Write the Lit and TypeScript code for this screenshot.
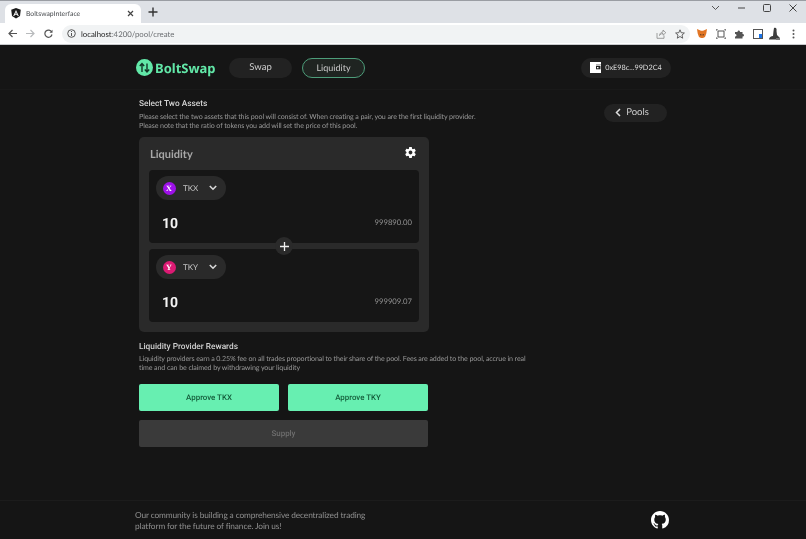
import { LitElement, html, css } from "lit";
import { customElement } from "lit/decorators.js";

const chev = (c: string) => html`<svg width="8" height="6" viewBox="0 0 8 6"><path d="M.8 1 4 4.200 7.200 1" fill="none" stroke="${c}" stroke-width="1.600"/></svg>`;

@customElement("app-root")
export class AppRoot extends LitElement {
  static styles = css`
    :host { display: block; width: 806px; height: 539px; overflow: hidden; background: #151515; font-family: Lato, sans-serif; color: #ddd; text-rendering: geometricPrecision; }
    .chrome { height: 45px; display: flex; flex-direction: column; background: #fff; will-change: transform; }
    .strip { height: 24px; box-sizing: border-box; background: #dee1e6; border-top: 1px solid #9a9da3; display: flex; align-items: flex-end; padding-left: 5px; }
    .tab { width: 136px; height: 19px; box-sizing: border-box; background: #fff; border-radius: 6px 6px 0 0; display: flex; align-items: center; padding: 0 7px 0 6px; gap: 5px; font: 6.800px Lato, sans-serif; color: #45484c; }
    .tab span { flex: 1; }
    .newtab { margin: 0 0 2px 7px; width: 14px; height: 14px; display: flex; }
    .winctl { margin-left: auto; display: flex; align-items: center; align-self: center; gap: 18px; padding: 0 9px 8px 0; }
    .toolbar { height: 21px; display: flex; align-items: center; padding: 0 8px 0 8px; border-bottom: 1px solid #c9cbce; }
    .nav { display: flex; gap: 9px; align-items: center; margin-right: 9px; }
    .addr { width: 628px; height: 18px; background: #f1f3f4; border-radius: 9px; display: flex; align-items: center; padding: 0 5px 0 5px; box-sizing: border-box; font: 7.800px Lato, sans-serif; color: #6a6d70; gap: 5px; }
    .addr b { font-weight: 400; color: #222; }
    .addr .r { margin-left: auto; display: flex; gap: 9px; align-items: center; }
    .exts { display: flex; align-items: center; gap: 8.500px; margin-left: 7px; }
    .avatar { margin-left: -3px; }
    .dots { margin-left: 2.500px; }

    .header { height: 45px; box-sizing: border-box; display: flex; align-items: center; padding: 1px 135px 0 136px; border-bottom: 1px solid #191919; will-change: transform; }
    .logo { display: flex; align-items: center; gap: 2px; font: 700 13px "Noto Sans", sans-serif; color: #62e8a8; width: 93px; }
    .pill { height: 20px; box-sizing: border-box; border-radius: 10px; background: #222; color: #ccc; font-size: 9px; display: flex; align-items: center; justify-content: center; }
    .swap { width: 63px; margin-right: 10px; font-size: 9.500px; }
    .liq { width: 63px; background: #1f2421; border: 1px solid #4d9d7a; }
    .wallet { margin-left: auto; width: 90px; gap: 4px; font-size: 7.300px; color: #ddd; }

    .main { height: 411px; box-sizing: border-box; display: flex; padding: 9px 139px 0 139px; border-bottom: 1px solid #1c1c1c; will-change: transform; }
    .col { width: 390px; flex: none; }
    h2 { margin: 0; font: 500 8.300px/11px Roboto, sans-serif; color: #d2d2d2; }
    p { margin: 2px 0 0; font-size: 7.100px; letter-spacing: -.11px; line-height: 9px; color: #969696; white-space: nowrap; }
    .card { width: 290px; height: 195px; margin-top: 7px; box-sizing: border-box; background: #2a2a2a; border-radius: 5px; padding: 0 10px; position: relative; }
    .card-h { height: 33px; box-sizing: border-box; display: flex; align-items: center; justify-content: space-between; font-size: 11px; font-weight: 700; color: #a8a8a8; padding: 1px 2px 0 1px; }
    .gear { margin-top: -3px; }
    .panel { height: 73px; box-sizing: border-box; background: #161616; border-radius: 4px; padding: 6px 7px 0 6.500px; margin-bottom: 6px; }
    .sel { display: flex; width: 70px; height: 24px; box-sizing: border-box; align-items: center; background: #2a2a2a; border-radius: 12px; padding: 0 9px 0 7px; font-size: 8px; color: #c4c4c4; }
    .coin { width: 13px; height: 13px; border-radius: 50%; color: #fff; font: 700 8px "Liberation Serif", serif; display: flex; align-items: center; justify-content: center; margin-right: 7.500px; flex: none; }
    .x { background: #9d10e8; }
    .y { background: #dc1a73; }
    .sel svg { margin-left: auto; }
    .row { display: flex; align-items: center; justify-content: space-between; margin-top: 16px; padding: 0 0 0 6.500px; }
    .amt { font: 700 14px Roboto, sans-serif; color: #f4f4f4; line-height: 17px; }
    .bal { font-size: 7.700px; color: #909090; margin-bottom: 5px; }
    .plus { position: absolute; left: 136px; top: 100px; width: 18px; height: 18px; border-radius: 50%; background: #2a2a2a; display: flex; align-items: center; justify-content: center; }
    .rewards { margin-top: 10px; }
    .rewards p { margin-top: 1px; }
    .btns { display: grid; grid-template-columns: 140px 140px; gap: 9px; width: 289px; margin-top: 12px; }
    .btn { height: 27px; border-radius: 2px; display: flex; align-items: center; justify-content: center; font: 500 7.900px Roboto, sans-serif; background: #67efb1; color: #145d3b; }
    .supply { grid-column: span 2; background: #3a3a3a; color: #6f6f6f; }
    .pools { margin: 4.500px 0 0 75px; width: 63px; height: 18px; gap: 5px; font-size: 9.500px; flex: none; padding-right: 7px; }
    .footer { height: 38px; display: flex; align-items: center; justify-content: space-between; padding: 0 137px 0 135px; will-change: transform; }
    .footer div { font-size: 8.300px; letter-spacing: -.11px; line-height: 11.500px; color: #8f8f8f; margin-top: 2px; }
  `;

  render() {
    return html`
      <div class="chrome">
        <div class="strip">
          <div class="tab">
            <svg width="10" height="11" viewBox="0 0 10 11"><path d="M5 0 .2 1.700 1 8 5 10.500 9 8 9.800 1.700Z" fill="#1a1a1a"/><path d="M5 2 2.200 8h1.100L3.900 6.700H6.100L6.700 8h1.100ZM4.300 5.800 5 4 5.700 5.800Z" fill="#fff"/></svg>
            <span>BoltswapInterface</span>
            <svg width="7" height="7" viewBox="0 0 7 7"><path d="M1 1 6 6M6 1 1 6" stroke="#444" stroke-width="1.200"/></svg>
          </div>
          <div class="newtab"><svg width="10" height="10" viewBox="0 0 10 10"><path d="M5 .5V9.500M.5 5H9.500" stroke="#333" stroke-width="1.400"/></svg></div>
          <div class="winctl">
            <svg width="9" height="6" viewBox="0 0 9 6"><path d="M1 1 4.500 4.500 8 1" fill="none" stroke="#555" stroke-width="1"/></svg>
            <svg width="7" height="2" viewBox="0 0 7 2"><path d="M0 1H7" stroke="#444"/></svg>
            <svg width="8" height="8" viewBox="0 0 8 8"><rect x=".5" y=".5" width="7" height="7" rx="1" fill="none" stroke="#444"/></svg>
            <svg width="8" height="8" viewBox="0 0 8 8"><path d="M.5 .5 7.500 7.500M7.500 .5 .5 7.500" stroke="#444"/></svg>
          </div>
        </div>
        <div class="toolbar">
          <div class="nav">
            <svg width="9" height="9" viewBox="0 0 9 9"><path d="M9 4.500H1M4.500 1 1 4.500 4.500 8" fill="none" stroke="#555" stroke-width="1.200"/></svg>
            <svg width="9" height="9" viewBox="0 0 9 9"><path d="M0 4.500H8M4.500 1 8 4.500 4.500 8" fill="none" stroke="#b8babc" stroke-width="1.200"/></svg>
            <svg width="9" height="9" viewBox="0 0 9 9"><path d="M7.700 3A3.600 3.600 0 1 0 8 5.500" fill="none" stroke="#555" stroke-width="1.200"/><path d="M8.500 .8V3.800H5.500Z" fill="#555"/></svg>
          </div>
          <div class="addr">
            <svg width="9" height="9" viewBox="0 0 9 9"><circle cx="4.500" cy="4.500" r="3.800" fill="none" stroke="#555"/><path d="M4.500 4V7M4.500 2V3" stroke="#555"/></svg>
            <span><b>localhost</b>:4200/pool/create</span>
            <div class="r">
              <svg width="10" height="10" viewBox="0 0 10 10"><path d="M1 4V9.300H8V6.500M3.500 6.500C3.800 4 5.500 3 7 3V1L9.800 3.700 7 6.200V4.500C5.500 4.500 4.500 5 3.500 6.500Z" fill="none" stroke="#888" stroke-width=".8"/></svg>
              <svg width="10" height="10" viewBox="0 0 10 10"><path d="M5 .8 6.200 3.700 9.400 4 7 6 7.700 9.200 5 7.500 2.300 9.200 3 6 .6 4 3.800 3.700Z" fill="none" stroke="#555" stroke-width=".9"/></svg>
            </div>
          </div>
          <div class="exts">
            <svg width="10" height="9" viewBox="0 0 10 9"><path d="M0 0 4 1.700H6L10 0 9.300 4.500 8 8 6 9H4L2 8 .7 4.500Z" fill="#e27625"/><path d="M3 5 4.500 5.500 4 7ZM7 5 5.500 5.500 6 7Z" fill="#3b2a1a"/></svg>
            <svg width="10" height="10" viewBox="0 0 10 10"><path d="M0 2V0H2M8 0H10V2M10 8V10H8M2 10H0V8" fill="none" stroke="#555"/><rect x="2" y="2" width="6" height="6" fill="none" stroke="#555"/></svg>
            <svg width="10" height="10" viewBox="0 0 10 10"><path d="M1 3H3.500C3.500 1 6 1 6 3H8.500V5C10.500 5 10.500 7.500 8.500 7.500V9.500H1V7.500C3 7.500 3 5 1 5Z" fill="#555"/></svg>
            <svg width="10" height="10" viewBox="0 0 10 10"><rect x=".5" y=".5" width="9" height="9" fill="none" stroke="#555"/><rect x="5" y="1" width="4" height="4" fill="#fff"/><rect x="6" y="5" width="3" height="4" fill="#1a73e8"/></svg>
            <svg class="avatar" width="13" height="13" viewBox="0 0 13 13"><path d="M6 1C8 0 9 1.500 8.500 4L9 8 12 11 11 12.500H1C1 10.500 3 9 5 9L5.500 4Z" fill="#3c3c3c"/><path d="M8 11H12V13H8Z" fill="#777"/></svg>
            <svg class="dots" width="3" height="10" viewBox="0 0 3 10"><circle cx="1.500" cy="1.500" r="1" fill="#555"/><circle cx="1.500" cy="5" r="1" fill="#555"/><circle cx="1.500" cy="8.500" r="1" fill="#555"/></svg>
          </div>
        </div>
      </div>

      <div class="header">
        <div class="logo">
          <svg width="17" height="17" viewBox="0 0 17 17"><circle cx="8.500" cy="8.500" r="8.500" fill="#62e8a8"/><path d="M6 13V5M3.800 7 6 4.500 8.200 7M11 4.500V12.500M8.800 10.500 11 13 13.200 10.500" fill="none" stroke="#123527" stroke-width="1.400"/></svg>
          <span>BoltSwap</span>
        </div>
        <div class="pill swap">Swap</div>
        <div class="pill liq">Liquidity</div>
        <div class="pill wallet">
          <svg width="11" height="11" viewBox="0 0 11 11"><path d="M0 0H11V2.500H6V8H11V11H0Z" fill="#fff"/><rect x="5.500" y="3.200" width="5.500" height="4.600" fill="none" stroke="#fff"/><rect x="7" y="5" width="1.500" height="1.300" fill="#fff"/></svg>
          <span>0xE98c...99D2C4</span>
        </div>
      </div>

      <div class="main">
        <div class="col">
          <h2>Select Two Assets</h2>
          <p>Please select the two assets that this pool will consist of. When creating a pair, you are the first liquidity provider.<br>Please note that the ratio of tokens you add will set the price of this pool.</p>
          <div class="card">
            <div class="card-h">
              <span>Liquidity</span>
              <svg class="gear" width="13" height="13" viewBox="0 0 24 24"><path fill="#fff" d="M19.430 12.980c.04-.32.07-.64.07-.98s-.03-.66-.07-.98l2.110-1.650c.19-.15.24-.42.12-.64l-2-3.460c-.12-.22-.39-.3-.61-.22l-2.490 1c-.52-.4-1.080-.73-1.690-.98l-.38-2.650A.488.488 0 0 0 14 2h-4c-.25 0-.46.18-.49.42l-.38 2.650c-.61.25-1.170.59-1.690.98l-2.490-1c-.23-.09-.49 0-.61.22l-2 3.460c-.13.22-.07.49.12.64l2.110 1.650c-.04.32-.07.65-.07.98s.03.66.07.98l-2.110 1.650c-.19.15-.24.42-.12.64l2 3.460c.12.22.39.3.61.22l2.490-1c.52.4 1.080.73 1.690.98l.38 2.650c.03.24.24.42.49.42h4c.25 0 .46-.18.49-.42l.38-2.650c.61-.25 1.170-.59 1.690-.98l2.490 1c.23.09.49 0 .61-.22l2-3.460c.12-.22.07-.49-.12-.64l-2.110-1.650zM12 15.500c-1.930 0-3.500-1.570-3.500-3.500s1.570-3.500 3.500-3.500 3.500 1.570 3.500 3.500-1.570 3.500-3.500 3.500z"/></svg>
            </div>
            <div class="panel">
              <div class="sel"><span class="coin x">X</span>TKX${chev("#d8d8d8")}</div>
              <div class="row"><span class="amt">10</span><span class="bal">999890.00</span></div>
            </div>
            <div class="panel">
              <div class="sel"><span class="coin y">Y</span>TKY${chev("#d8d8d8")}</div>
              <div class="row"><span class="amt">10</span><span class="bal">999909.07</span></div>
            </div>
            <div class="plus"><svg width="9" height="9" viewBox="0 0 9 9"><path d="M4.500 0V9M0 4.500H9" stroke="#eee" stroke-width="1.300"/></svg></div>
          </div>
          <div class="rewards">
            <h2>Liquidity Provider Rewards</h2>
            <p>Liquidity providers earn a 0.25% fee on all trades proportional to their share of the pool. Fees are added to the pool, accrue in real<br>time and can be claimed by withdrawing your liquidity</p>
          </div>
          <div class="btns">
            <div class="btn">Approve TKX</div>
            <div class="btn">Approve TKY</div>
            <div class="btn supply">Supply</div>
          </div>
        </div>
        <div class="pill pools">
          <svg width="6" height="9" viewBox="0 0 6 9"><path d="M5 1 1.500 4.500 5 8" fill="none" stroke="#ddd" stroke-width="1.500"/></svg>
          <span>Pools</span>
        </div>
      </div>

      <div class="footer">
        <div>Our community is building a comprehensive decentralized trading<br>platform for the future of finance. Join us!</div>
        <svg width="18" height="18" viewBox="0 0 16 16"><path fill="#fff" d="M8 0C3.580 0 0 3.580 0 8c0 3.540 2.290 6.530 5.470 7.590.4.070.55-.17.55-.38 0-.19-.01-.82-.01-1.490-2.010.37-2.530-.49-2.690-.94-.09-.23-.48-.94-.82-1.130-.28-.15-.68-.52-.01-.53.63-.01 1.080.58 1.230.82.720 1.210 1.870.87 2.330.66.070-.52.280-.87.510-1.070-1.780-.2-3.640-.89-3.640-3.950 0-.87.31-1.590.82-2.150-.08-.2-.36-1.020.08-2.120 0 0 .67-.21 2.200.82.640-.18 1.320-.27 2-.27s1.360.09 2 .27c1.530-1.040 2.200-.82 2.200-.82.440 1.100.16 1.920.08 2.120.51.56.82 1.270.82 2.150 0 3.070-1.870 3.750-3.650 3.950.29.250.54.730.54 1.480 0 1.070-.01 1.930-.01 2.200 0 .21.150.46.550.38A8.010 8.010 0 0 0 16 8c0-4.420-3.580-8-8-8z"/></svg>
      </div>
    `;
  }
}
